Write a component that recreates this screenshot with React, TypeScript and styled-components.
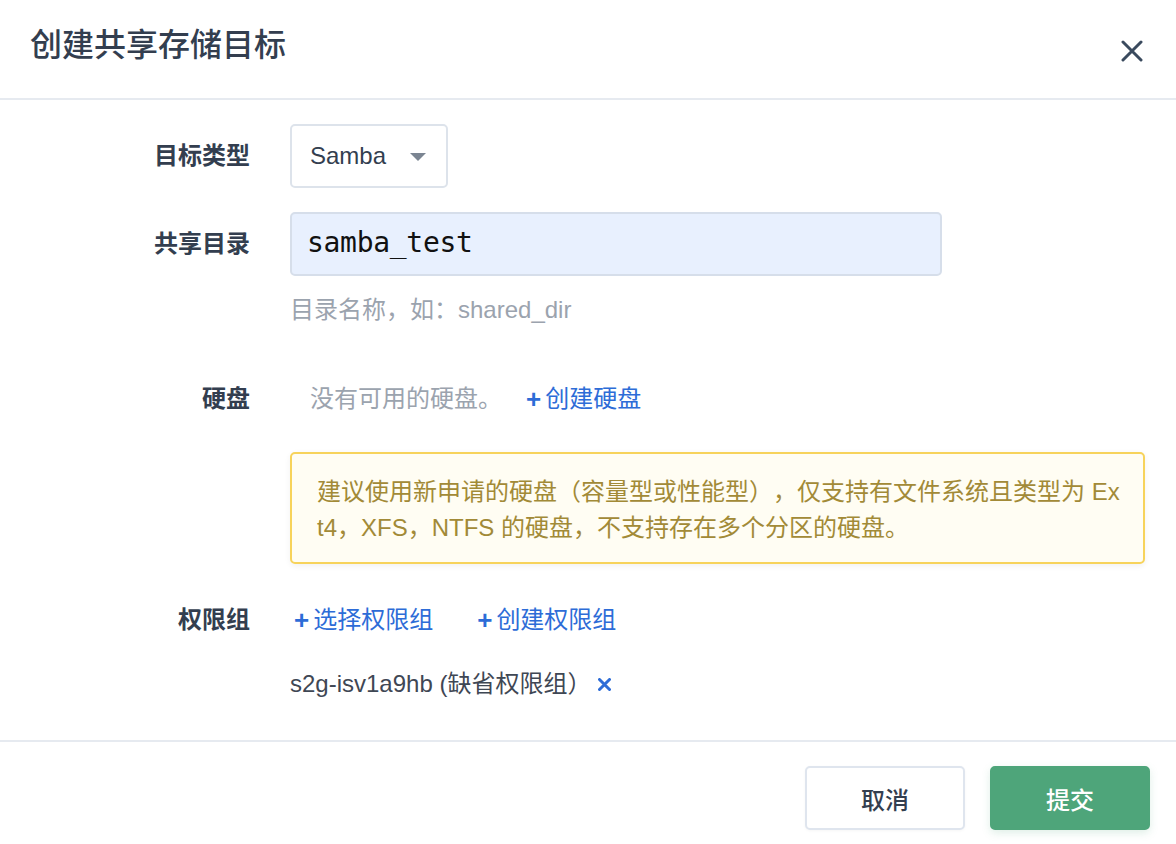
import React from "react";
import styled, { createGlobalStyle } from "styled-components";

const Global = createGlobalStyle`
  html, body { margin: 0; padding: 0; background: #ffffff; }
  body {
    font-family: "Liberation Sans", "Noto Sans CJK SC", sans-serif;
    color: #333e4f;
    text-spacing-trim: space-all;
  }
  * { box-sizing: border-box; }
`;

const Dialog = styled.div`
  width: 1176px;
  height: 844px;
  display: flex;
  flex-direction: column;
  background: #fff;
`;

const Header = styled.div`
  height: 100px;
  border-bottom: 2px solid #e6eaf0;
  display: flex;
  align-items: flex-start;
  justify-content: space-between;
  padding: 24px 33px 0 30px;
`;

const Title = styled.h1`
  margin: 0;
  font-size: 32px;
  line-height: 42px;
  font-weight: 500;
  color: #333e4f;
`;

const CloseButton = styled.button`
  border: none;
  background: transparent;
  padding: 0;
  margin-top: 15px;
  width: 22px;
  height: 24px;
  display: flex;
  align-items: center;
  justify-content: center;
  cursor: pointer;
`;

const Body = styled.div`
  flex: 1;
  padding: 24px 31px 0 0;
  display: grid;
  grid-template-columns: 250px 1fr;
  column-gap: 40px;
  align-content: start;
`;

const Label = styled.div<{ $mt?: number }>`
  text-align: right;
  font-size: 24px;
  font-weight: 700;
  color: #333e4f;
  line-height: 36px;
  align-self: ${(p) => (p.$mt !== undefined ? "start" : "center")};
  margin-top: ${(p) => p.$mt ?? 0}px;
  white-space: nowrap;
`;

const Cell = styled.div<{ $mt?: number }>`
  margin-top: ${(p) => p.$mt ?? 0}px;
  display: flex;
  align-items: center;
  min-width: 0;
`;

const Select = styled.div`
  width: 158px;
  height: 64px;
  border: 2px solid #dde3eb;
  border-radius: 5px;
  display: flex;
  align-items: center;
  justify-content: space-between;
  padding: 0 20px 0 18px;
  font-size: 24px;
  color: #333e4f;
  background: #fff;
`;

const Caret = styled.span`
  width: 0;
  height: 0;
  border-left: 8px solid transparent;
  border-right: 8px solid transparent;
  border-top: 8px solid #7b8592;
  margin-top: 2px;
`;

const TextInput = styled.input`
  width: 652px;
  height: 64px;
  border: 2px solid #d6deea;
  border-radius: 5px;
  background: #e8f0fe;
  padding: 8px 15px 12px 15px;
  font-family: "DejaVu Sans Mono", monospace;
  font-size: 28px;
  line-height: 1.5;
  letter-spacing: -0.3px;
  color: #111;
  outline: none;
`;

const Hint = styled.div`
  font-size: 24px;
  line-height: 36px;
  color: #9ba3ae;
`;

const Muted = styled.span`
  font-size: 24px;
  line-height: 36px;
  color: #9ba3ae;
  padding-left: 20px;
  margin-right: 20px;
`;

const LinkButton = styled.a<{ $gap?: number }>`
  display: inline-flex;
  align-items: center;
  font-size: 24px;
  line-height: 36px;
  color: #2d6cd7;
  text-decoration: none;
  cursor: pointer;
  margin-right: ${(p) => p.$gap ?? 0}px;
`;

const Plus = styled.span`
  font-family: "Liberation Sans", sans-serif;
  font-weight: 700;
  font-size: 26px;
  margin-right: 4px;
  margin-left: 4px;
`;

const Notice = styled.div`
  width: 100%;
  border: 2px solid #f7d35b;
  border-radius: 5px;
  background: #fffdf3;
  padding: 20px 22px 16px 25px;
  font-size: 24px;
  line-height: 36px;
  color: #a28a37;
  word-break: break-all;
  text-spacing-trim: space-all;
  box-shadow: 0 2px 6px rgba(0, 0, 0, 0.06);
`;

const Tag = styled.div`
  display: flex;
  align-items: center;
  font-size: 24px;
  line-height: 36px;
  color: #3f4754;
`;

const RemoveIcon = styled.button`
  border: none;
  background: transparent;
  padding: 0;
  margin-left: 7px;
  display: flex;
  align-items: center;
  cursor: pointer;
`;

const Footer = styled.div`
  height: 104px;
  border-top: 2px solid #e6eaf0;
  display: flex;
  justify-content: flex-end;
  align-items: flex-start;
  gap: 25px;
  padding: 24px 26px 0 0;
`;

const Button = styled.button<{ $primary?: boolean }>`
  width: 160px;
  height: 64px;
  border-radius: 5px;
  font-family: "Liberation Sans", "Noto Sans CJK SC", sans-serif;
  font-size: 24px;
  font-weight: 500;
  cursor: pointer;
  border: 2px solid ${(p) => (p.$primary ? "#4ea57a" : "#dfe5ee")};
  background: ${(p) => (p.$primary ? "#4ea57a" : "#ffffff")};
  color: ${(p) => (p.$primary ? "#ffffff" : "#333e4f")};
  box-shadow: ${(p) => (p.$primary ? "0 3px 8px rgba(78,165,122,0.18)" : "0 1px 3px rgba(0,0,0,0.04)")};
`;

export default function App() {
  return (
    <>
      <Global />
      <Dialog>
        <Header>
          <Title>创建共享存储目标</Title>
          <CloseButton aria-label="关闭">
            <svg width="22" height="22" viewBox="0 0 22 22">
              <path d="M2 2 L20 20 M20 2 L2 20" stroke="#3a4a5e" strokeWidth="3" strokeLinecap="round" />
            </svg>
          </CloseButton>
        </Header>
        <Body>
          <Label>目标类型</Label>
          <Cell>
            <Select>
              <span>Samba</span>
              <Caret />
            </Select>
          </Cell>

          <Label $mt={38}>共享目录</Label>
          <Cell $mt={24}>
            <TextInput defaultValue="samba_test" />
          </Cell>

          <div />
          <Cell $mt={16}>
            <Hint>目录名称，如：shared_dir</Hint>
          </Cell>

          <Label $mt={53}>硬盘</Label>
          <Cell $mt={53}>
            <Muted>没有可用的硬盘。</Muted>
            <LinkButton>
              <Plus>+</Plus>创建硬盘
            </LinkButton>
          </Cell>

          <div />
          <Cell $mt={35}>
            <Notice>
              建议使用新申请的硬盘（容量型或性能型），仅支持有文件系统且类型为 Ext4，XFS，NTFS 的硬盘，不支持存在多个分区的硬盘。
            </Notice>
          </Cell>

          <Label $mt={38}>权限组</Label>
          <Cell $mt={38}>
            <LinkButton $gap={40}>
              <Plus>+</Plus>选择权限组
            </LinkButton>
            <LinkButton>
              <Plus>+</Plus>创建权限组
            </LinkButton>
          </Cell>

          <div />
          <Cell $mt={28}>
            <Tag>
              s2g-isv1a9hb (缺省权限组）
              <RemoveIcon aria-label="移除">
                <svg width="13" height="13" viewBox="0 0 13 13">
                  <path d="M1.5 1.5 L11.5 11.5 M11.5 1.5 L1.5 11.5" stroke="#2d6cd7" strokeWidth="3" strokeLinecap="round" />
                </svg>
              </RemoveIcon>
            </Tag>
          </Cell>
        </Body>
        <Footer>
          <Button>取消</Button>
          <Button $primary>提交</Button>
        </Footer>
      </Dialog>
    </>
  );
}
